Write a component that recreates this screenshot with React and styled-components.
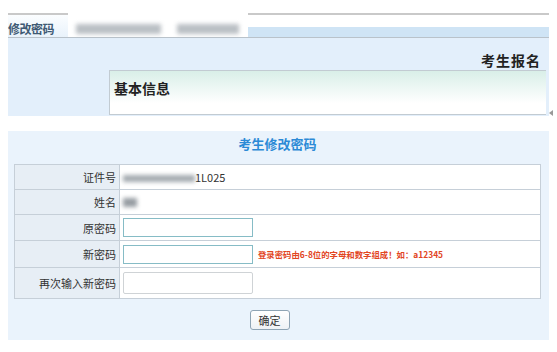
import React from 'react';
import styled, { createGlobalStyle } from 'styled-components';

const GlobalStyle = createGlobalStyle`
  html, body {
    margin: 0;
    padding: 0;
    background: #fff;
    font-family: "Noto Sans CJK SC", "Noto Sans", sans-serif;
    font-size: 11px;
    color: #333;
  }
`;

const Page = styled.div`
  width: 557px;
  height: 352px;
  padding: 13px 8px 0 8px;
  box-sizing: border-box;
  display: flex;
  flex-direction: column;
`;

const TabBar = styled.div`
  height: 25px;
  border-top: 2px solid #c9c9c9;
  border-bottom: 1px solid #b9c2ca;
  display: flex;
  align-items: stretch;
  box-sizing: border-box;
`;

const Tab = styled.div`
  width: ${p => p.width}px;
  padding-top: 5px;
  box-sizing: border-box;
  display: flex;
  align-items: center;
  justify-content: ${p => (p.active ? 'flex-start' : 'center')};
  background: ${p => (p.active ? 'linear-gradient(#fbfdff, #e9f2fb)' : '#fff')};
  font-weight: bold;
  font-size: 12px;
  color: #3f5a74;
  letter-spacing: -0.5px;
  ${p => !p.active && 'margin-top: -2px; border-top: 2px solid #fff;'}
`;

const Blur = styled.span`
  display: inline-block;
  width: ${p => p.width}px;
  height: ${p => p.height || 10}px;
  background: ${p => p.color || '#a9b0b6'};
  filter: blur(2px);
  opacity: 0.8;
`;

const TabFill = styled.div`
  flex: 1;
  display: flex;
  flex-direction: column;
  justify-content: flex-end;
`;

const TabBand = styled.div`
  height: 10px;
  background: #cfe4f5;
`;

const InfoPanel = styled.div`
  height: 78px;
  background: #e3effb;
  display: flex;
  flex-direction: column;
  align-items: flex-end;
`;

const BigTitle = styled.div`
  font-family: "DejaVu Serif", "Noto Sans CJK SC", serif;
  font-weight: bold;
  font-size: 14px;
  color: #222;
  padding: 12px 8px 0 0;
  height: 20px;
  letter-spacing: 1px;
`;

const InfoBox = styled.div`
  width: 437px;
  height: 45px;
  box-sizing: border-box;
  border: 1px solid #c2cbd2;
  border-right: none;
  background: linear-gradient(#d9efe8, #ffffff 75%);
  padding: 7px 0 0 4px;
  font-weight: bold;
  font-size: 14px;
  color: #222;
  position: relative;
  margin-right: 3px;
`;

const ScrollArrow = styled.span`
  position: absolute;
  right: -7px;
  bottom: -2px;
  width: 0;
  height: 0;
  border-top: 3px solid transparent;
  border-bottom: 3px solid transparent;
  border-right: 4px solid #999;
`;

const FormPanel = styled.div`
  margin-top: 15px;
  height: 209px;
  width: 541px;
  background: #eaf3fc;
  padding: 0 8px 0 6px;
  box-sizing: border-box;
  display: flex;
  flex-direction: column;
`;

const FormTitle = styled.div`
  height: 33px;
  padding-bottom: 9px;
  box-sizing: border-box;
  display: flex;
  align-items: center;
  justify-content: center;
  color: #2c8ad6;
  font-weight: bold;
  font-size: 13px;
`;

const Table = styled.table`
  width: 527px;
  border-collapse: collapse;
  table-layout: fixed;
  background: #fff;
  border: 1px solid #bfc9d3;
`;

const Row = styled.tr`
  height: ${p => p.h}px;
`;

const Label = styled.td`
  background: #e7eef5;
  border: 1px solid #c6cfd8;
  text-align: right;
  padding: 0 3px 0 0;
  font-size: 11px;
  color: #333;
`;

const Cell = styled.td`
  border: 1px solid #c6cfd8;
  padding: 0 0 0 3px;
  font-size: 11px;
  color: #333;
  white-space: nowrap;
`;

const Input = styled.input`
  width: 130px;
  height: ${p => (p.plain ? 22 : 19)}px;
  box-sizing: border-box;
  border: 1px solid ${p => (p.plain ? '#cfd3d6' : '#86bcc6')};
  border-radius: ${p => (p.plain ? 2 : 0)}px;
  vertical-align: middle;
  margin: 0;
  background: #fff;
`;

const Hint = styled.span`
  color: #e2461f;
  font-size: 8.4px;
  font-weight: bold;
  margin-left: 5px;
  vertical-align: middle;
`;

const Actions = styled.div`
  flex: 1;
  display: flex;
  align-items: center;
  justify-content: center;
  padding-right: 16px;
`;

const Button = styled.button`
  width: 40px;
  height: 20px;
  border: 1px solid #8ea4b4;
  border-radius: 3px;
  background: linear-gradient(#ffffff, #eef2f5);
  font-family: inherit;
  font-size: 11px;
  color: #333;
  padding: 0;
`;

const rows = [
  { label: '证件号', h: 25, value: <><Blur width={72} height={7} color="#8d959c" />1L025</> },
  { label: '姓名', h: 25, value: <Blur width={14} height={9} color="#7d858c" /> },
  { label: '原密码', h: 26, value: <Input /> },
  {
    label: '新密码',
    h: 27,
    value: (
      <>
        <Input />
        <Hint>登录密码由6-8位的字母和数字组成！如：a12345</Hint>
      </>
    ),
  },
  { label: '再次输入新密码', h: 31, value: <Input plain /> },
];

export default function App() {
  return (
    <>
      <GlobalStyle />
      <Page>
        <TabBar>
          <Tab active width={60}>修改密码</Tab>
          <Tab width={100}><Blur width={85} /></Tab>
          <Tab width={80}><Blur width={62} /></Tab>
          <TabFill><TabBand /></TabFill>
        </TabBar>
        <InfoPanel>
          <BigTitle>考生报名</BigTitle>
          <InfoBox>
            基本信息
            <ScrollArrow />
          </InfoBox>
        </InfoPanel>
        <FormPanel>
          <FormTitle>考生修改密码</FormTitle>
          <Table>
            <colgroup>
              <col style={{ width: 105 }} />
              <col />
            </colgroup>
            <tbody>
              {rows.map(r => (
                <Row key={r.label} h={r.h}>
                  <Label>{r.label}</Label>
                  <Cell>{r.value}</Cell>
                </Row>
              ))}
            </tbody>
          </Table>
          <Actions>
            <Button>确定</Button>
          </Actions>
        </FormPanel>
      </Page>
    </>
  );
}
